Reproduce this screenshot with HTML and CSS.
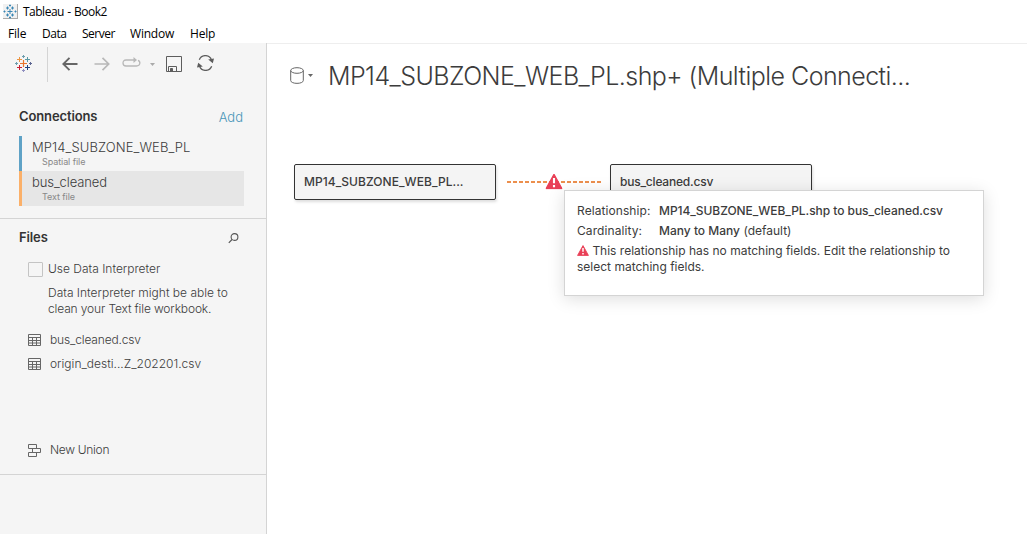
FILE: index.html
```html
<!DOCTYPE html>
<html lang="en">
<head>
<meta charset="utf-8">
<title>Tableau - Book2</title>
<link rel="stylesheet" href="styles.css">
</head>
<body>
<svg class="defs" width="0" height="0">
  <symbol id="grid" viewBox="0 0 13 12">
    <path d="M.5 .5h12v11H.5zM0 3.500h13M0 6.500h13M0 9h13M4.500 3v9M8.500 3v9" fill="none" stroke="#666"/>
  </symbol>
  <symbol id="alert" viewBox="0 0 16 15">
    <path d="M8 0.8 15.4 14.2H.6z" fill="#e94057" stroke="#e94057" stroke-width="1.2" stroke-linejoin="round"/>
    <path d="M8 4.2v5M8 10.8v2" stroke="#fff" stroke-width="2"/>
  </symbol>
</svg>
<header class="titlebar">
  <svg class="app-icon" width="15" height="15" viewBox="0 0 15 15">
    <rect width="15" height="15" fill="#f1f1f1"/><path d="M0 14.5h15M14.5 0v15" stroke="#aaa"/>
    <path d="M7 5v5M4.500 7.500h5M4.500 2.500v3M3 4h3M9.500 2.500v3M8 4h3M4.500 9.500v3M3 11h3M9.500 9.500v3M8 11h3M7 .5v2M6 1.500h2M7 12.500v2M6 13.500h2M1.500 6.500v2M.5 7.500h2M12.500 6.500v2M11.500 7.500h2" stroke="#3a87b5" fill="none"/>
  </svg>
  <span>Tableau - Book2</span>
</header>
<nav class="menu"><span class="m-file">File</span><span class="m-data">Data</span><span class="m-server">Server</span><span class="m-window">Window</span><span>Help</span></nav>
<div class="workspace">
  <aside class="sidebar">
    <div class="toolbar">
      <svg class="logo" width="17" height="17" viewBox="0 0 17 17" fill="none">
        <path d="M8.500 5v7M5 8.500h7" stroke="#e8762c" stroke-width="1.200"/>
        <path d="M4.500 2v5M2 4.500h5" stroke="#eb9543"/><path d="M12.500 2v5M10 4.500h5" stroke="#5b9aa4"/>
        <path d="M4.500 10v5M2 12.500h5" stroke="#c72035"/><path d="M12.500 10v5M10 12.500h5" stroke="#1f447e"/>
        <path d="M8.500 0v3M7 1.500h3M1.500 7v3M0 8.500h3" stroke="#6d9dad"/><path d="M8.500 14v3M7 15.500h3" stroke="#8f8fc0"/><path d="M15.500 7v3M14 8.500h3" stroke="#5c6692"/>
      </svg>
      <span class="divider"></span>
      <svg class="back" width="16" height="14" viewBox="0 0 16 14" fill="none" stroke="#666" stroke-width="1.900"><path d="M15.500 7H1.500M7.500 .8 1.300 7l6.200 6.200"/></svg>
      <svg class="forward" width="16" height="14" viewBox="0 0 16 14" fill="none" stroke="#b8b8b8" stroke-width="1.700"><path d="M.5 7h14M8.500 .8 14.700 7l-6.200 6.200"/></svg>
      <svg class="loop" width="19" height="10" viewBox="0 0 19 10" fill="none" stroke="#b8b8b8" stroke-width="1.300"><path d="M12 3H4C0 3 0 9 4 9h10.500c4 0 4.300-4.800 1.500-5.700"/><path d="M11.500 0 15 3 11.500 6z" fill="#b8b8b8" stroke="none"/></svg>
      <svg class="caret" width="5" height="3"><path d="M0 0h5L2.500 3z" fill="#aaa"/></svg>
      <svg class="save" width="16" height="16" viewBox="0 0 16 16" fill="none" stroke="#5d5d5d"><path d="M.5 .5h15v15H.5zM2.500 15v-4.500h8V15"/><path d="M4.500 12.500h2v3h-2z" fill="#5d5d5d"/></svg>
      <svg class="refresh" width="17" height="16" viewBox="0 0 17 16" fill="none" stroke="#5d5d5d" stroke-width="1.300"><path d="M2.300 4.700C4.500-.8 12.500-.8 14.500 5M14.700 11.300C12.500 16.800 4.500 16.800 2.500 11"/><path d="M11.200 4.500 17 3.500 15.800 8.200zM5.800 11.500 0 12.500 1.200 7.800z" fill="#5d5d5d" stroke="none"/></svg>
    </div>
    <section class="connections">
      <div class="heading"><h2>Connections</h2><a class="add">Add</a></div>
      <div class="connection spatial"><b class="c-mp">MP14_SUBZONE_WEB_PL</b><small>Spatial file</small></div>
      <div class="connection text-file"><b class="c-bus">bus_cleaned</b><small>Text file</small></div>
    </section>
    <section class="files">
      <div class="heading"><h2 class="h-files">Files</h2>
        <svg class="search" width="11" height="11" viewBox="0 0 11 11" fill="none" stroke="#555" stroke-width="1.100"><circle cx="6.500" cy="4" r="3.400"/><path d="M4 6.500.8 9.800"/></svg>
      </div>
      <label class="interpreter"><i class="checkbox"></i><span class="use">Use Data Interpreter</span></label>
      <p class="hint"><span class="hint-one">Data Interpreter might be able to</span><br><span class="hint-two">clean your Text file workbook.</span></p>
      <div class="file"><svg width="13" height="12"><use href="#grid"/></svg><span class="f-bus">bus_cleaned.csv</span></div>
      <div class="file"><svg width="13" height="12"><use href="#grid"/></svg><span class="f-origin">origin_desti...Z_202201.csv</span></div>
      <div class="file union"><svg width="13" height="13" viewBox="0 0 13 13" fill="none" stroke="#666"><path d="M.5 .5h8v4h-8zM4.500 4.500h8v4h-8zM.5 8.500h8v4h-8z"/></svg><span class="f-union">New Union</span></div>
    </section>
  </aside>
  <main class="canvas">
    <div class="datasource">
      <svg class="cylinder" width="14" height="17" viewBox="0 0 14 17" fill="none" stroke="#666"><ellipse cx="7" cy="3.500" rx="6.300" ry="2.800"/><path d="M.7 3.500v10c0 3.800 12.600 3.800 12.600 0v-10"/></svg>
      <svg class="ds-caret" width="5" height="3"><path d="M0 0h5L2.500 3z" fill="#666"/></svg>
      <h1>MP14_SUBZONE_WEB_PL.shp+ (Multiple Connecti...</h1>
    </div>
    <div class="model">
      <div class="node"><span class="n-mp">MP14_SUBZONE_WEB_PL...</span></div>
      <div class="link"><svg width="94" height="16" viewBox="0 0 94 16"><path d="M0 8h94" stroke="#ec8f4d" stroke-width="2" stroke-dasharray="4 2"/><use href="#alert" x="38.500" y="-.5" width="17" height="16"/></svg></div>
      <div class="node"><span class="n-bus">bus_cleaned.csv</span></div>
    </div>
    <div class="tooltip">
      <div class="row"><span class="t-rel">Relationship:</span><strong class="t-name">MP14_SUBZONE_WEB_PL.shp to bus_cleaned.csv</strong></div>
      <div class="row"><span class="t-rel">Cardinality:</span><span class="t-many"><strong>Many to Many</strong> (default)</span></div>
      <p><svg width="12" height="11"><use href="#alert"/></svg> <span class="t-warn">This relationship has no matching fields. Edit the relationship to</span><br><span class="t-select">select matching fields.</span></p>
    </div>
  </main>
</div>
</body>
</html>
```
FILE: styles.css
```css
* { box-sizing: border-box; }
body { margin: 0; width: 1027px; height: 534px; overflow: hidden; background: #fff; color: #3c3c3c; font: 12px/16px Inter, "Open Sans", sans-serif; display: flex; flex-direction: column; }
svg { display: block; flex: none; }
.defs { position: absolute; }
h1, h2, p { margin: 0; }
.titlebar { height: 23px; flex: none; display: flex; gap: 5px; padding: 4px 0 0 3px; color: #000; font: 12px/16px "Open Sans", "Noto Sans", sans-serif; letter-spacing: -.4px; word-spacing: .8px; }
.titlebar span { letter-spacing: -.5px; }
.menu { height: 20px; flex: none; display: flex; gap: 16px; padding: 3px 0 0 8px; color: #000; font: 12px/16px "Open Sans", "Noto Sans", sans-serif; letter-spacing: -.2px; }
.menu span { white-space: nowrap; }
.m-file { width: 18px; }
.m-data { width: 24px; letter-spacing: -.5px; }
.m-server { width: 32px; letter-spacing: -.5px; }
.m-window { width: 44px; }
.workspace { flex: 1; display: flex; }
.sidebar { width: 267px; flex: none; background: #f5f5f5; border-right: 1px solid #d4d4d4; }
.toolbar { height: 60px; display: flex; align-items: flex-start; padding-left: 15px; }
.logo { margin-top: 12px; }
.divider { width: 1px; height: 35px; margin: 4px 0 0 15px; background: #d4d4d4; }
.back { margin: 14px 0 0 14px; }
.forward { margin: 14px 0 0 16px; }
.loop { margin: 14px 0 0 12px; }
.caret { margin: 20px 0 0 9px; }
.save { margin: 13px 0 0 11px; }
.refresh { margin: 12px 0 0 15px; }
.connections { height: 116px; border-bottom: 1px solid #d4d4d4; padding: 4px 22px 0 19px; }
.heading { display: flex; justify-content: space-between; align-items: center; height: 18px; }
h2 { font-size: 13px; font-weight: 600; line-height: 18px; letter-spacing: -.12px; color: #333; }
.add { font-size: 13px; color: #4996b8; font-weight: 300; margin: 2px 1px 0 0; }
.connection { height: 35px; border-left: 3px solid #5fa2c6; padding: 3px 0 0 10px; }
.connection.spatial { margin-top: 11px; }
.connection.text-file { border-color: #fbb069; background: #e6e6e6; }
.connection b { display: block; font-weight: 350; font-size: 13px; line-height: 17px; white-space: nowrap; }
.c-mp { letter-spacing: .1px; }
.c-bus { letter-spacing: -.1px; }
.connection small { display: block; font-size: 9px; line-height: 12px; color: #888; padding-left: 10px; letter-spacing: -.08px; }
.files { height: 256px; border-bottom: 1px solid #d4d4d4; padding: 9px 27px 0 19px; font-weight: 350; }
.search { margin-top: 2px; }
.interpreter { display: flex; align-items: center; gap: 5px; height: 16px; margin-top: 15px; padding-left: 9px; white-space: nowrap; }
.checkbox { width: 15px; height: 15px; border: 1px solid #c4c4c4; border-radius: 1px; }
.hint { margin: 8px 0 0 29px; white-space: nowrap; }
.hint-two { letter-spacing: -.14px; }
.file { display: flex; align-items: center; gap: 9px; height: 24px; padding-left: 9px; white-space: nowrap; }
.f-bus { letter-spacing: -.16px; }
.f-union { letter-spacing: -.3px; }
.hint + .file { margin-top: 11px; }
.union { margin-top: 62px; }
.canvas { flex: 1; min-width: 0; position: relative; border-top: 1px solid #eee; padding-left: 23px; }
.datasource { display: flex; align-items: flex-start; padding-top: 14px; }
.cylinder { margin-top: 9px; }
.ds-caret { margin: 16px 0 0 4px; }
h1 { font-size: 25px; line-height: 36px; font-weight: 300; margin-left: 15px; white-space: nowrap; letter-spacing: -.55px; }
.model { display: flex; align-items: center; padding: 70px 0 0 4px; }
.node { width: 202px; height: 36px; border: 1px solid #333; border-radius: 2px; background: #f4f4f4; padding: 9px; box-shadow: 1px 2px 3px #0002; font-weight: 500; white-space: nowrap; }
.n-mp { letter-spacing: .05px; }
.n-bus { letter-spacing: -.2px; }
.link { margin: 0 9px 0 11px; }
.tooltip { position: absolute; left: 297px; top: 146px; width: 420px; height: 106px; background: #fff; border: 1px solid #d4d4d4; box-shadow: 0 3px 16px #0002; padding: 12px; white-space: nowrap; }
.row { display: grid; grid-template-columns: 82px 1fr; height: 20px; }
.row strong { font-weight: 500; }
.t-rel { letter-spacing: .08px; }
.t-name { letter-spacing: -.05px; }
.tooltip p svg { display: inline-block; vertical-align: -1px; }
```
